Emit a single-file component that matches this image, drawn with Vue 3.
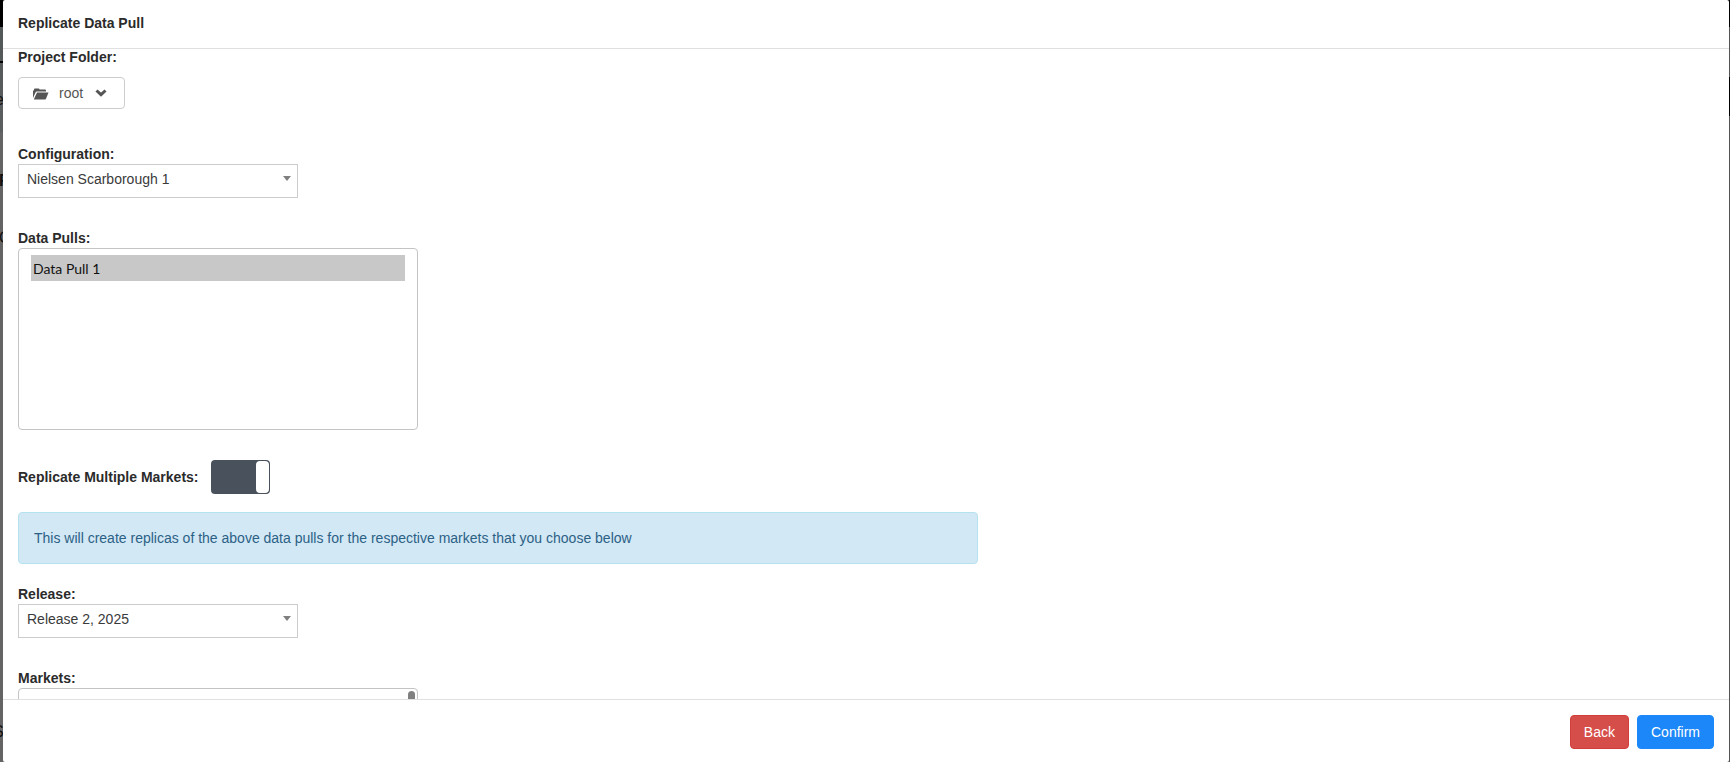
<script setup>
import { ref } from 'vue'

const configuration = ref('Nielsen Scarborough 1')
const release = ref('Release 2, 2025')
const pulls = ref(['Data Pull 1'])
const markets = ref([])
const multiple = ref(true)
</script>

<template>
  <div class="screen">
    <div class="page" aria-hidden="true">
      <span class="rule"></span>
      <span class="edge"></span>
      <span class="letter e">e</span>
      <span class="letter f">F</span>
      <span class="letter c">C</span>
      <span class="letter s">S</span>
    </div>
    <section class="modal" role="dialog" aria-labelledby="title">
      <header class="head">
        <h1 id="title">Replicate Data Pull</h1>
      </header>

      <main class="body">
        <div class="group folder">
          <span id="folder-label" class="label">Project Folder:</span>
          <button id="folder" type="button" class="picker" aria-labelledby="folder-label folder">
            <svg class="folder-icon" viewBox="0 0 16 12" aria-hidden="true">
              <path d="M0 10V2.500H1V1.500Q1 .5 2 .5H5.500Q6.500 .5 6.500 1.500H12Q13 1.500 13 2.500V3.500H4Q3 3.500 2.500 4.500Z" />
              <path d="M4 4.500H15.500L13 10.800Q12.700 11.500 12 11.500H.8Z" />
            </svg>
            <span>root</span>
            <svg class="chevron" viewBox="0 0 12 8" aria-hidden="true">
              <path d="M1.500 1.500L6 5.700L10.500 1.500" />
            </svg>
          </button>
        </div>

        <div class="group">
          <label class="label" for="configuration">Configuration:</label>
          <div class="dropdown">
            <select id="configuration" v-model="configuration">
              <option>Nielsen Scarborough 1</option>
            </select>
            <svg class="caret" viewBox="0 0 8 5" aria-hidden="true"><path d="M0 0H8L4 5Z" /></svg>
          </div>
        </div>

        <div class="group pulls">
          <label class="label" for="pulls">Data Pulls:</label>
          <select id="pulls" v-model="pulls" class="list" multiple>
            <option>Data Pull 1</option>
          </select>
        </div>

        <div class="switch-row">
          <label class="label" for="multiple">Replicate Multiple Markets:</label>
          <input id="multiple" v-model="multiple" class="switch" type="checkbox" role="switch" />
        </div>

        <p class="info">
          This will create replicas of the above data pulls for the respective markets that you choose below
        </p>

        <div class="group">
          <label class="label" for="release">Release:</label>
          <div class="dropdown">
            <select id="release" v-model="release">
              <option>Release 2, 2025</option>
            </select>
            <svg class="caret" viewBox="0 0 8 5" aria-hidden="true"><path d="M0 0H8L4 5Z" /></svg>
          </div>
        </div>

        <div class="group">
          <label class="label" for="markets">Markets:</label>
          <div class="scroller">
            <select id="markets" v-model="markets" class="list" multiple></select>
            <span class="thumb"></span>
          </div>
        </div>
      </main>

      <footer class="foot">
        <button type="button" class="btn back">Back</button>
        <button type="button" class="btn confirm">Confirm</button>
      </footer>
    </section>
  </div>
</template>

<style>
body {
  margin: 0;
  overflow: hidden;
}
</style>

<style scoped>
* {
  box-sizing: border-box;
}
.screen {
  position: relative;
  height: 100vh;
  padding: 0 1px 0 3px;
  overflow: hidden;
  background: linear-gradient(#000 27px, #525757 27px, #5c5f5f 132px, #646464 133px);
  font: 14px/20px "Liberation Sans", Arial, sans-serif;
  color: #2b2b2b;
}
.page {
  position: absolute;
  inset: 0;
  overflow: hidden;
  color: #111;
}
.rule {
  position: absolute;
  top: 61px;
  left: 0;
  width: 3px;
  height: 2px;
  background: #000;
}
.edge {
  position: absolute;
  inset: 0 0 0 auto;
  width: 1px;
  background: linear-gradient(#000 27px, #555 27px 77px, #000 77px 116px, #555 116px);
}
.letter {
  position: absolute;
  font-size: 16px;
}
.e {
  top: 90px;
  left: -5px;
}
.f {
  top: 171px;
  left: -1px;
  font-weight: 700;
}
.c {
  top: 228px;
  left: -1px;
}
.s {
  top: 722px;
  left: -7px;
}
.modal {
  position: relative;
  display: flex;
  flex-direction: column;
  height: 100%;
  background: #fff;
  border-radius: 2px;
}
.head {
  flex: none;
  padding: 13px 15px 15px;
  border-bottom: 1px solid #e0e0e0;
}
h1 {
  margin: 0;
  font-size: 14px;
  line-height: 20px;
}
.body {
  flex: 1;
  min-height: 0;
  padding: 0 15px;
  overflow-y: auto;
  scrollbar-width: none;
}
.group {
  display: flex;
  flex-direction: column;
  align-items: flex-start;
  gap: 2px;
  margin-bottom: 32px;
}
.folder {
  gap: 12px;
  margin-bottom: 37px;
}
.pulls {
  margin-bottom: 30px;
}
.label {
  font-weight: 700;
  line-height: 16px;
}
.picker {
  display: flex;
  align-items: center;
  height: 32px;
  padding: 0 17px 0 14px;
  border: 1px solid #ccc;
  border-radius: 4px;
  background: #fff;
  color: #555;
  font: inherit;
}
.folder-icon {
  width: 16px;
  height: 12px;
  margin: 2px 10px 0 0;
  fill: #555;
}
.chevron {
  width: 12px;
  height: 8px;
  margin-left: 12px;
  fill: none;
  stroke: #555;
  stroke-width: 3;
}
.dropdown,
.scroller {
  position: relative;
}
.dropdown {
  width: 280px;
}
.dropdown select {
  display: block;
  width: 100%;
  height: 34px;
  padding: 0 24px 4px 8px;
  border: 1px solid #ccc;
  border-radius: 0;
  background: #fff;
  color: #3a3a3a;
  font: inherit;
  appearance: none;
}
.caret {
  position: absolute;
  top: 12px;
  right: 7px;
  width: 8px;
  height: 5px;
  fill: #808080;
  pointer-events: none;
}
.list {
  display: block;
  width: 400px;
  height: 182px;
  padding: 6px 12px;
  border: 1px solid #c4c4c4;
  border-radius: 4px;
  background: #fff;
  font: 14px/20px Lato, sans-serif;
  outline: none;
  scrollbar-width: none;
}
.list option {
  height: 26px;
  padding: 5px 2px 0;
  color: #111;
}
.list option:checked {
  background: #c8c8c8 linear-gradient(#c8c8c8, #c8c8c8);
}
.thumb {
  position: absolute;
  top: 3px;
  right: 3px;
  width: 7px;
  height: 60px;
  border-radius: 4px;
  background: #808080;
}
.switch-row {
  display: flex;
  align-items: center;
  gap: 12px;
  margin-bottom: 18px;
}
.switch {
  display: flex;
  width: 59px;
  height: 34px;
  margin: 0;
  padding: 1px;
  border-radius: 4px;
  background: #49515c;
  appearance: none;
}
.switch::before {
  content: "";
  width: 13px;
  border-radius: 4px;
  background: #fff;
}
.switch:checked::before {
  margin-left: auto;
}
.info {
  max-width: 960px;
  margin: 0 0 22px;
  padding: 15px;
  border: 1px solid #b5e2ef;
  border-radius: 4px;
  background: #d3e8f5;
  color: #2b6185;
}
.foot {
  flex: none;
  display: flex;
  justify-content: flex-end;
  gap: 8px;
  padding: 15px 15px 13px;
  border-top: 1px solid #e0e0e0;
}
.btn {
  height: 34px;
  padding: 0 13px;
  border: 1px solid;
  border-radius: 4px;
  color: #fff;
  font: inherit;
}
.back {
  border-color: #d03f3b;
  background: #d64e4a;
}
.confirm {
  border-color: #1b87f9;
  background: #1b87f9;
}
</style>
